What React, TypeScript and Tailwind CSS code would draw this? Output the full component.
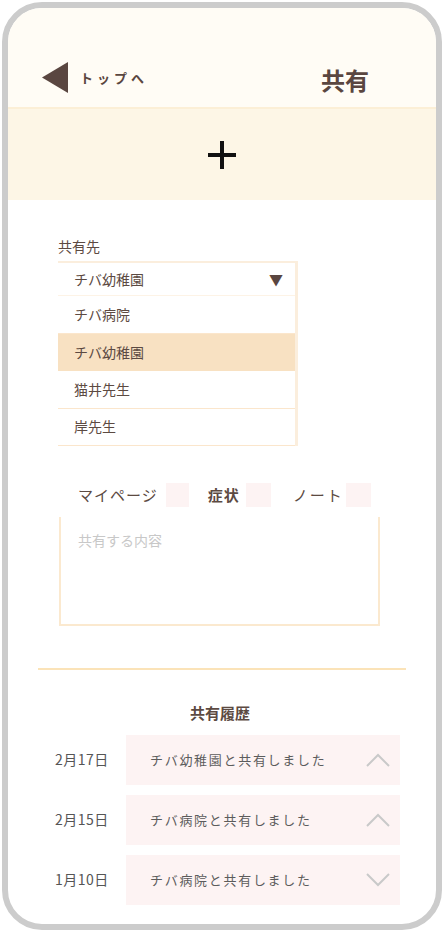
import React from "react";

const font = { fontFamily: '"Noto Sans CJK JP", "Noto Sans", sans-serif' };

function Chevron({ up }: { up: boolean }) {
  return (
    <svg width="24" height="14" viewBox="0 0 24 14" className="shrink-0">
      <path
        d={up ? "M1 13 L12 2 L23 13" : "M1 1 L12 12 L23 1"}
        fill="none"
        stroke="#c9c9c9"
        strokeWidth="2"
      />
    </svg>
  );
}

export default function App() {
  const options = ["チバ病院", "チバ幼稚園", "猫井先生", "岸先生"];
  const history = [
    { date: "2月17日", text: "チバ幼稚園と共有しました", up: true },
    { date: "2月15日", text: "チバ病院と共有しました", up: true },
    { date: "1月10日", text: "チバ病院と共有しました", up: false },
  ];
  return (
    <div className="w-[444px] h-[931px] bg-white" style={font}>
      <div className="ml-[2px] mt-[2px] w-[440px] h-[928px] border-[6px] border-[#cccccc] rounded-[40px] overflow-hidden bg-white flex flex-col">
        {/* header */}
        <div className="h-[99px] bg-[#fffcf5] flex items-center pt-[40px] pl-[34px] pr-[67px] shrink-0">
          <svg width="27" height="31" viewBox="0 0 27 31" className="shrink-0">
            <polygon points="0,15.5 26,0 26,31" fill="#5a4640" />
          </svg>
          <span className="ml-[11px] text-[13px] font-bold tracking-[4px] text-[#5a4640]">トップへ</span>
          <span className="ml-auto text-[24px] font-bold text-[#5a4640] mt-[4px]">共有</span>
        </div>
        {/* plus band */}
        <div className="h-[93px] bg-[#fdf6e6] border-t-[2px] border-[#fcefd6] flex items-center justify-center shrink-0">
          <svg width="30" height="30" viewBox="0 0 30 30">
            <path d="M15 1 V29 M1 15 H29" stroke="#111" strokeWidth="4" />
          </svg>
        </div>
        {/* share target */}
        <div className="pl-[50px] pt-[36px]">
          <div className="text-[14px] text-[#5c4a42] leading-[20px]">共有先</div>
          <div className="mt-[5px] w-[240px] border-t-[2px] border-r-[3px] border-[#fbeedd]">
            <div className="h-[33px] flex items-center pl-[16px] pr-[12px] border-b border-[#fdf3e6]">
              <span className="text-[14px] text-[#5c4a42]">チバ幼稚園</span>
              <span className="ml-auto text-[14px] text-[#5a4640] leading-none">▼</span>
            </div>
            {options.map((o, i) => (
              <div
                key={o}
                className={
                  "h-[37.5px] flex items-center pl-[16px] text-[14px] text-[#5c4a42] " +
                  (i === 1 ? "bg-[#f8e1c2] pl-[12px]" : "border-b border-[#fbe6cc]")
                }
              >
                {o}
              </div>
            ))}
          </div>
        </div>
        {/* tabs */}
        <div className="pl-[70px] mt-[37px] flex items-center h-[24px]">
          <span className="text-[15px] text-[#5c4a42] tracking-[1px]">マイページ</span>
          <span className="ml-[8px] w-[23px] h-[24px] bg-[#fdf3f3]" />
          <span className="ml-[19px] text-[15px] font-bold text-[#5c4a42] tracking-[1px]">症状</span>
          <span className="ml-[6px] w-[25px] h-[24px] bg-[#fdf3f3]" />
          <span className="ml-[22px] text-[15px] text-[#5c4a42] tracking-[2px]">ノート</span>
          <span className="ml-[2px] w-[25px] h-[24px] bg-[#fdf3f3]" />
        </div>
        {/* textarea */}
        <div className="ml-[51px] mt-[10px] w-[321px] h-[109px] border-x-[2px] border-b-[2px] border-[#fbe9cf] pl-[17px] pt-[10px]">
          <span className="text-[14px] text-[#c8c8c8]">共有する内容</span>
        </div>
        {/* divider */}
        <div className="ml-[30px] mt-[42px] w-[368px] h-[2px] bg-[#fbe3b8]" />
        {/* history */}
        <div className="mt-[32px] text-center text-[15px] font-bold text-[#5c4a42] pr-[4px]">共有履歴</div>
        <div className="mt-[10px] flex flex-col gap-[10px] pl-[47px]">
          {history.map((h) => (
            <div key={h.date + h.text} className="flex items-center">
              <span className="w-[71px] text-[14px] text-[#555] tracking-[0.5px]">{h.date}</span>
              <div className="w-[274px] h-[50px] bg-[#fdf3f3] flex items-center pl-[24px] pr-[10px]">
                <span className="text-[13px] text-[#5c5c5c] tracking-[1.7px]">{h.text}</span>
                <span className="ml-auto">
                  <Chevron up={h.up} />
                </span>
              </div>
            </div>
          ))}
        </div>
      </div>
    </div>
  );
}
